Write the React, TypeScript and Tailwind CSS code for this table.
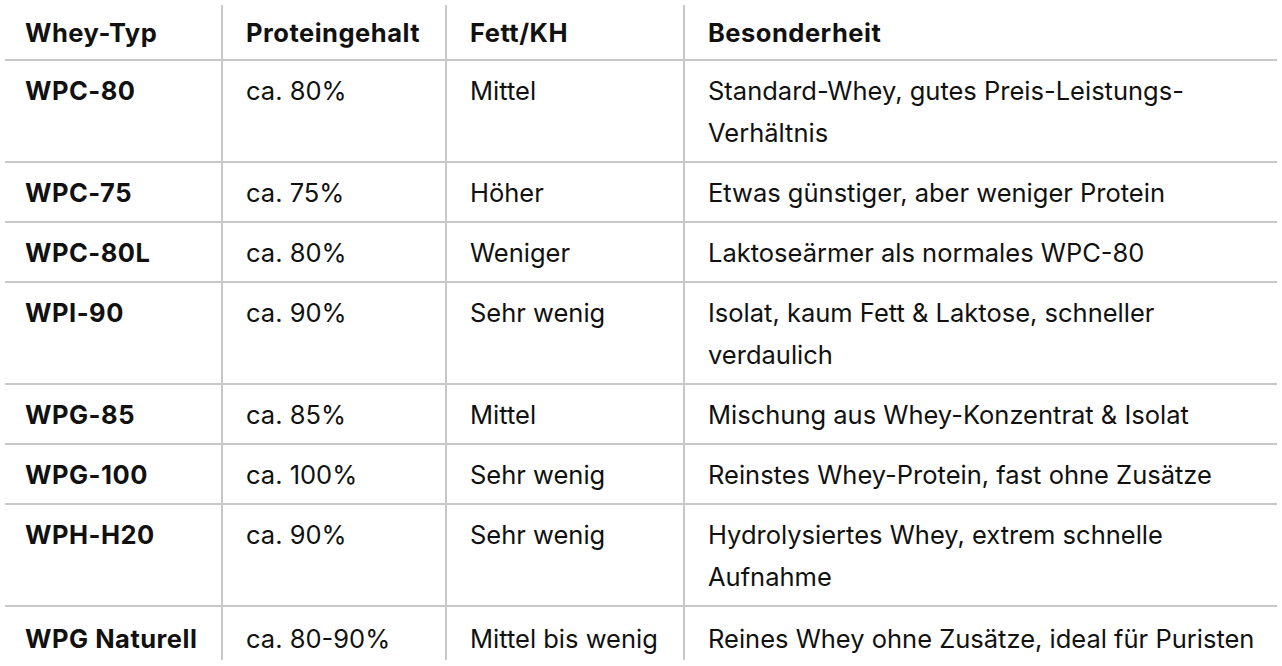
import React from 'react';

const rows: [string, string, string, string][] = [
  ['WPC-80', 'ca. 80%', 'Mittel', 'Standard-Whey, gutes Preis-Leistungs-Verhältnis'],
  ['WPC-75', 'ca. 75%', 'Höher', 'Etwas günstiger, aber weniger Protein'],
  ['WPC-80L', 'ca. 80%', 'Weniger', 'Laktoseärmer als normales WPC-80'],
  ['WPI-90', 'ca. 90%', 'Sehr wenig', 'Isolat, kaum Fett & Laktose, schneller verdaulich'],
  ['WPG-85', 'ca. 85%', 'Mittel', 'Mischung aus Whey-Konzentrat & Isolat'],
  ['WPG-100', 'ca. 100%', 'Sehr wenig', 'Reinstes Whey-Protein, fast ohne Zusätze'],
  ['WPH-H20', 'ca. 90%', 'Sehr wenig', 'Hydrolysiertes Whey, extrem schnelle Aufnahme'],
  ['WPG Naturell', 'ca. 80-90%', 'Mittel bis wenig', 'Reines Whey ohne Zusätze, ideal für Puristen'],
];

const headers = ['Whey-Typ', 'Proteingehalt', 'Fett/KH', 'Besonderheit'];

export default function App() {
  return (
    <div className="bg-white min-h-screen pt-[5px] pl-[5px] text-[#111111] font-['Inter','Noto_Sans',sans-serif]">
      <table className="table-fixed border-collapse w-[1272px] text-[25.5px] leading-[42px]">
        <colgroup>
          <col className="w-[217px]" />
          <col className="w-[224px]" />
          <col className="w-[238px]" />
          <col className="w-[593px]" />
        </colgroup>
        <thead>
          <tr>
            {headers.map((h, i) => (
              <th
                key={h}
                className={`text-left font-bold tracking-[0.5px] align-top pt-[7px] pb-[5px] border-b-2 border-[#c8c8c8] ${
                  i === 0 ? 'pl-[20px]' : 'pl-[23px]'
                } ${i < 3 ? 'border-r-2' : 'pr-[8px]'}`}
              >
                {h}
              </th>
            ))}
          </tr>
        </thead>
        <tbody>
          {rows.map((r, ri) => {
            const last = ri === rows.length - 1;
            return (
              <tr key={r[0]}>
                {r.map((c, i) => (
                  <td
                    key={i}
                    className={`align-top border-[#c8c8c8] ${
                      last ? 'pt-[11px] pb-0' : 'pt-[9px] pb-[7px] border-b-2'
                    } ${i === 0 ? 'pl-[20px] font-bold tracking-[0.5px]' : 'pl-[23px]'} ${
                      i < 3 ? 'border-r-2' : 'pr-[8px]'
                    }`}
                  >
                    {c}
                  </td>
                ))}
              </tr>
            );
          })}
        </tbody>
      </table>
    </div>
  );
}
